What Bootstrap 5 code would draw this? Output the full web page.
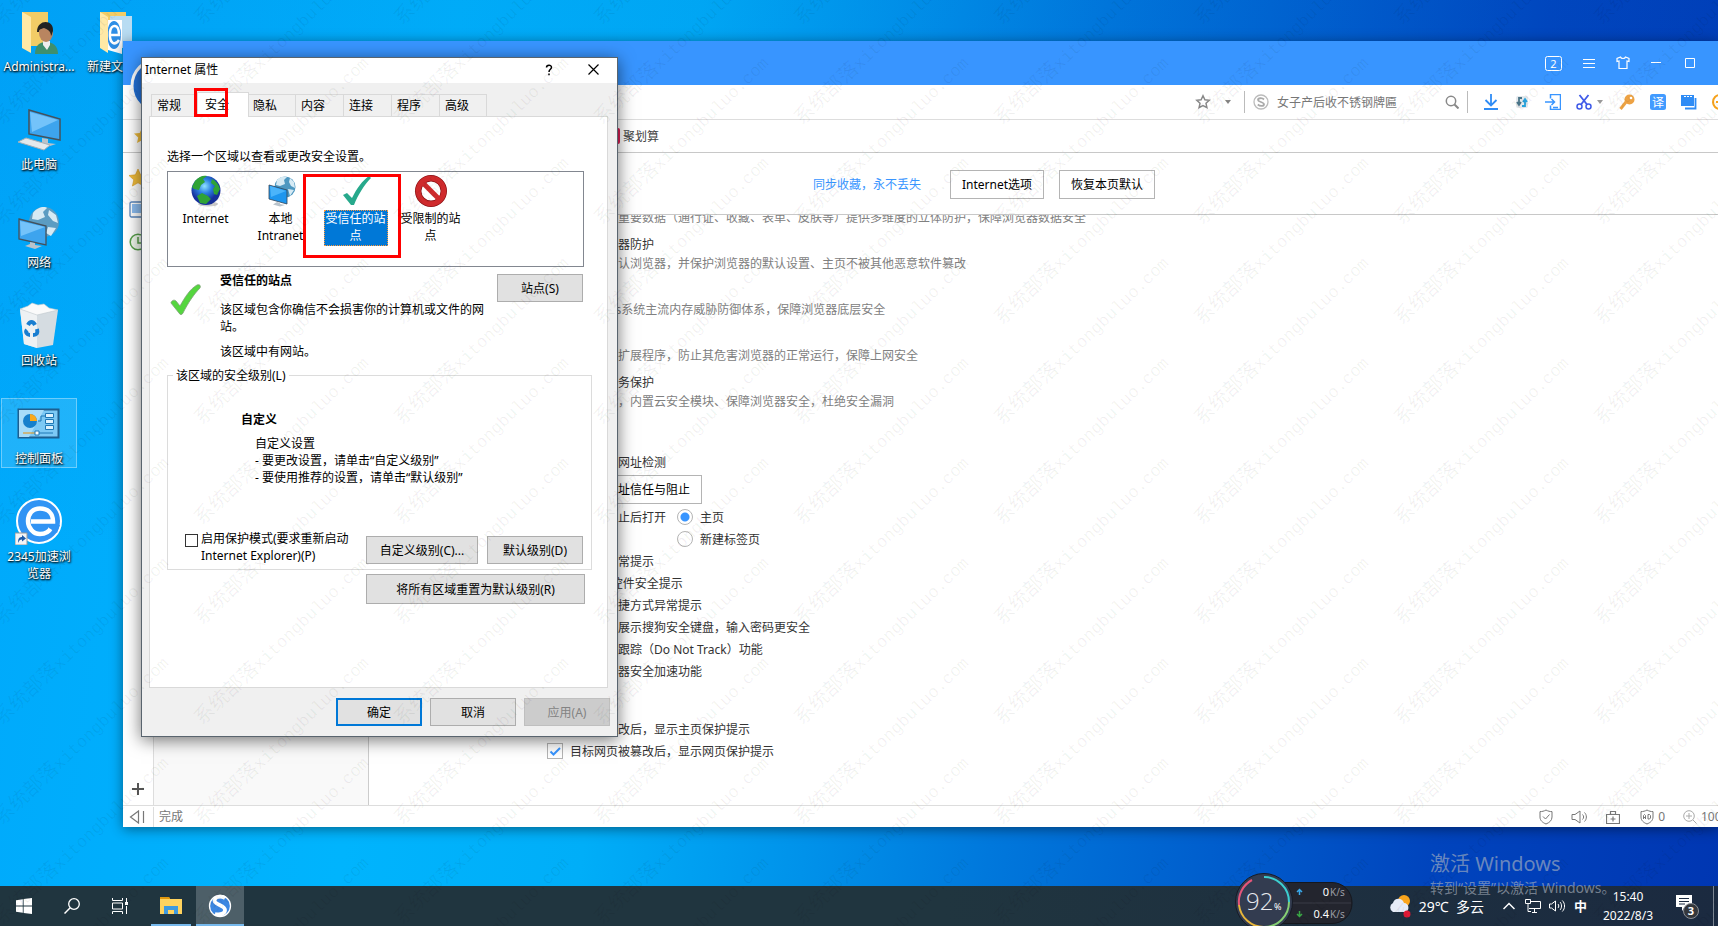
<!DOCTYPE html>
<html lang="zh-CN">
<head>
<meta charset="utf-8">
<meta name="viewport" content="width=device-width, initial-scale=1">
<title>Internet 属性</title>
<link href="https://cdn.jsdelivr.net/npm/bootstrap@5.3.0/dist/css/bootstrap.min.css" rel="stylesheet">
<style>
  body{font-family:"Noto Sans","Noto Sans CJK SC",sans-serif;font-size:12px;line-height:17px;color:#000;
    background:linear-gradient(180deg,rgba(0,90,200,.1),rgba(0,200,255,0) 60%),linear-gradient(98deg,#00a8fb 0%,#00b4fd 25%,#00aef8 38%,#0092ea 50%,#0078dc 60%,#005ecd 72%,#0044bd 84%,#0036b2 100%)}
  svg{display:block;flex:none}
  button{font-family:inherit;color:inherit}
  .plain{border:0;background:none;padding:0;display:block}
  /* desktop icons */
  .icons{left:1px;top:6px;gap:0 2px}
  .ico{width:76px;height:98px;color:#fff;text-decoration:none;text-shadow:1px 1px 2px #000,0 1px 2px rgba(0,0,0,.7)}
  .ico svg{margin:0 auto 3px}
  .ico.sel .face{background:rgba(255,255,255,.12);outline:1px solid rgba(255,255,255,.35);outline-offset:-1px}
  .face{height:70px;padding-top:1px}
  /* browser window */
  .browser{left:123px;top:41px;right:0;bottom:99px;box-shadow:0 2px 12px rgba(0,0,0,.45)}
  .b-title{height:44px;background:#3895ff;gap:21px;padding-right:23px}
  .b-tools{height:35px;border-bottom:1px solid #ddd}
  .b-marks{height:33px;border-bottom:1px solid #c8c8c8;color:#444}
  .b-logo{left:6px;top:15px}
  .vsep{width:1px;height:22px;background:#bbb}
  .find{width:160px;border:0;outline:0;padding:0;color:#777}
  .find::placeholder{color:#777;opacity:1}
  .ext{gap:15px;padding-left:15px}
  .rail{width:31px;border-right:1px solid #ddd}
  .side{width:215px;background:#f9f9f9;border-right:1px solid #ccc}
  .hd{height:62px;border-bottom:1px solid #c8c8c8;padding:2px 0 0 178px}
  .hd>div{width:608px;gap:15px}
  .hd a{color:#3895ff;text-decoration:none;margin-right:14px}
  .flat{height:29px;border:1px solid #b4b4b4;background:#fff;padding:0 11px}
  .opts{padding-left:178px;color:#333}
  .scrolled{margin-top:-7px}
  .sec{padding-left:23px;line-height:20px}
  .sec h6{font-size:12px;line-height:20px;font-weight:400;margin:7px 0 -1px}
  .sec p{margin:0;color:#808080}
  .ln{height:22px;gap:7px}
  .opts input{appearance:none;width:16px;height:16px;border:1px solid #b4b4b4;margin:0;background:#fff;flex:none}
  .opts input[type=checkbox]:checked{background:#fff url("data:image/svg+xml,%3Csvg xmlns='http://www.w3.org/2000/svg' viewBox='0 0 14 14'%3E%3Cpath d='M2.5 7.5l3 3L12 4' fill='none' stroke='%233895ff' stroke-width='2'/%3E%3C/svg%3E")}
  .opts input[type=radio]{border-radius:50%}
  .opts input[type=radio]:checked{background:radial-gradient(circle,#3895ff 4px,#fff 5px)}
  .b-status{height:22px;border-top:1px solid #ddd;color:#777}
  .b-status .st{border-left:1px solid #ddd;padding-left:5px;line-height:20px}
  /* property sheet */
  .dlg{left:141px;top:57px;width:477px;background:#f0f0f0;border:1px solid #59646e;box-shadow:0 3px 16px rgba(0,0,0,.55)}
  .dlg-t{height:25px;padding:0 0 2px 3px}
  .tabs{height:24px;margin:9px 9px 0 9px}
  .tabs button{width:48px;height:22px;border:1px solid #d9d9d9;border-bottom:0;border-right:0;background:#f0f0f0;padding:0 0 0 5px;text-align:left}
  .tabs button.on{width:52px;height:25px;margin:0 -2px -1px;padding:0 0 2px 7px;background:#fff;border-right:1px solid #d9d9d9;position:relative;z-index:1}
  .tabs button:last-child{border-right:1px solid #d9d9d9}
  .sheet{margin:0 9px 0 7px;padding:31px 14px 83px 17px;background:#fff;border:1px solid #d9d9d9}
  .zones{width:417px;height:96px;border:1px solid #828790;margin-top:5px}
  .zone{width:75px;padding-top:3px;text-align:center}
  .zone svg{margin:0 auto 3px}
  .zone span{display:block;width:64px;height:36px;margin:0 auto}
  .zone.on span{background:#0078d7;color:#fff;outline:1px dotted #ff9a3c;outline-offset:-1px}
  .w32{height:28px;min-width:86px;border:1px solid #adadad;background:#e1e1e1;padding:0}
  .w32.def{border:2px solid #0078d7}
  .w32:disabled{background:#ccc;border-color:#bfbfbf;color:#838383}
  .about{width:416px;padding-top:5px}
  .about .pic{width:53px;padding:12px 0 0 3px}
  .about .txt{width:268px}
  .about .w32{margin-top:2px}
  .lvl{width:425px;border:1px solid #dcdcdc;padding:0 8px 5px 0;margin-top:7px}
  .lvl legend{float:none;width:auto;margin:0 0 0 5px;padding:0 3px;font-size:12px;line-height:17px}
  .lvl h6{font-size:12px;line-height:17px;margin:27px 0 7px 73px}
  .lvl .why{margin-left:87px}
  .lvl .act{margin-top:44px;padding-left:17px}
  .lvl input{appearance:none;width:13px;height:13px;border:1px solid #333;background:#fff;margin:4px 3px 0 0;flex:none}
  .ring{border:3px solid #f00;pointer-events:none}
  .r1{left:52px;top:30px;width:34px;height:29px;z-index:2}
  .r2{left:135px;top:2px;width:98px;height:84px}
  /* taskbar */
  .task{height:40px;background:linear-gradient(90deg,#20353f,#20353f 55%,#1b2a40);color:#fff}
  .tb{width:48px;height:40px;display:flex;align-items:center;justify-content:center}
  .tb.run{border-bottom:2px solid #76b9ed;padding-top:2px}
  .tb.cur{background:#4d5f68}
  .wx{font-size:14px}
  .clock{line-height:19px;text-align:center;width:60px}
  .act-note{left:1430px;bottom:27px;color:rgba(175,182,192,.62);font-size:14px;line-height:22px;white-space:nowrap;pointer-events:none}
  .act-note b{font-weight:400;font-size:20px;line-height:26px;display:block}
  .meter{left:1235px;bottom:-5px}
  .wm{inset:0;width:100%;height:100%;pointer-events:none;fill:rgba(0,0,0,.06);font:20px "Noto Sans CJK SC",sans-serif}
  .wm .lat{font:17px "Liberation Mono",monospace}
</style>
</head>
<body class="vh-100 overflow-hidden position-relative d-flex flex-column">
<main class="flex-grow-1">
  <nav class="icons position-absolute d-flex">
    <div>
      <a class="ico d-block text-center" href="#"><div class="face"><svg width="48" height="48" viewBox="0 0 48 48"><path d="M7 5h26v34H7z" fill="#f2cc66"/><path d="M7 5l9 5v36l-9-5z" fill="#ffe9a6"/><path d="M20 47c0-8 4-12 11-12s12 4 12 12z" fill="#3f8f6d"/><path d="M28 34h7v4l-3 5-4-5z" fill="#eee"/><ellipse cx="31" cy="26" rx="7" ry="9" fill="#b98560"/><path d="M22 25c0-13 17-13 16-1-1 2-1 4-2 5 0-5-4-7-7-8-3 1-5 1-5 4z" fill="#222"/></svg>Administra...</div></a>
      <a class="ico d-block text-center" href="#"><div class="face"><svg width="48" height="48" viewBox="0 0 48 48"><path d="M14 5l31 9v21l-31-6z" fill="#3da4ee" stroke="#44515c" stroke-width="1.5"/><path d="M15 7l28 8-26 12z" fill="#74c3fa"/><path d="M27 33l6 1v4l8 1-9 3-11-3 6-2z" fill="#b9c3cb"/><path d="M3 37l8-4 24 7-6 5z" fill="#e4e9ec" stroke="#a6b0b7"/></svg>此电脑</div></a>
      <a class="ico d-block text-center" href="#"><div class="face"><svg width="48" height="48" viewBox="0 0 48 48"><circle cx="29" cy="19" r="15" fill="#5b9cc2"/><path d="M18 10c4-6 12-7 14-5l-4 4 2 5-7 3-6-1zM34 7l7 5 2 8-5-2-5-6zM33 24l8 1-5 8-5-3z" fill="#d6eaf4"/><path d="M4 16l27 7v19L4 36z" fill="#3da4ee" stroke="#44515c" stroke-width="1.3"/><path d="M5 18l25 6L6 33z" fill="#74c3fa"/><path d="M15 39l5 1v2l7 1-7 3-10-3 5-2z" fill="#b9c3cb"/></svg>网络</div></a>
      <a class="ico d-block text-center" href="#"><div class="face"><svg width="48" height="48" viewBox="0 0 48 48"><path d="M5 8l38 1-5 35-16 3-13-4z" fill="#d5dce1"/><path d="M5 8l17 5v34l-13-4z" fill="#eef1f3"/><path d="M5 8l8-3 4-3 6 2 6-1 5 4 9 2-21 5z" fill="#fafafa" stroke="#bfc7cc" stroke-width=".6"/><g fill="none" stroke="#1a7ed0" stroke-width="4"><path d="M13 24c2-4 5-4 7 0M22 28c1 4 0 6-4 6M12 29c-2 2 0 5 3 5"/></g></svg>回收站</div></a>
      <a class="ico sel d-block text-center" href="#"><div class="face"><svg width="48" height="48" viewBox="0 0 48 48"><path d="M3.500 10.500h40v28h-40z" fill="#7cc9f5" stroke="#1d5f90" stroke-width="2"/><path d="M4 11h25L14 38H4z" fill="#a6dcf9"/><circle cx="15" cy="22" r="7" fill="#1580cc"/><path d="M15 22v-7a7 7 0 0 1 7 7z" fill="#fba919"/><g fill="#ddf2fd" stroke="#1f78b6"><path d="M30.500 14.500h8v4h-8zM30.500 20.500h8v4h-8zM30.500 26.500h8v4h-8z"/><path d="M23 22h3v-5h4" fill="none"/></g><path d="M8 34h13" stroke="#e8920f"/><path d="M24 34h14" stroke="#1f78b6"/><path d="M20 32h4v4h-4z" fill="#fff" stroke="#1f78b6"/></svg>控制面板</div></a>
      <a class="ico d-block text-center" href="#"><div class="face"><svg width="48" height="48" viewBox="0 0 48 48"><circle cx="24" cy="24" r="22" fill="#3194f4" stroke="#fff" stroke-width="2"/><path d="M16 24.500h22c0-8-5-13-13-13-8 0-12 6-12 12.500S18 37 25 37c6 0 9-2 11-6" fill="none" stroke="#fff" stroke-width="4.500"/><path d="M34 28h11l-3 8-8-5z" fill="#3194f4"/><path d="M0 36h12v12H0z" fill="#f3f5f7" stroke="#999"/><path d="M3 46c0-4 1-6 4-6v-2l4 3.500-4 3v-2c-2 0-3 1-4 3.500z" fill="#1e5aa8"/></svg>2345加速浏<br>览器</div></a>
    </div>
    <a class="ico d-block text-center" href="#"><div class="face"><svg width="48" height="48" viewBox="0 0 48 48"><path d="M7 5h26v34H7z" fill="#f2cc66"/><path d="M17 9h22v32H17z" fill="#b8dcf2"/><path d="M15 13h14v34l-14-4z" fill="#fff"/><ellipse cx="21" cy="28" rx="7" ry="14" fill="#2e8ee6"/><path d="M16 28h10c0-12-8-11-9-3-1 12 5 14 9 8" stroke="#fff" stroke-width="2.500" fill="none"/><path d="M7 5l8 5v36l-8-5z" fill="#ffe9a6"/></svg>新建文件夹</div></a>
  </nav>

  <section class="browser position-absolute bg-white d-flex flex-column overflow-hidden">
    <header class="b-title d-flex align-items-center justify-content-end text-white">
      <button class="plain" aria-label="2"><svg width="17" height="15" viewBox="0 0 17 15"><rect x=".5" y=".5" width="16" height="14" rx="2" fill="none" stroke="#fff"/><text x="8.500" y="11.500" text-anchor="middle" font-size="11" fill="#fff">2</text></svg></button>
      <button class="plain" aria-label="菜单"><svg width="12" height="11" viewBox="0 0 12 11"><path d="M0 1.500h12M0 5.500h12M0 9.500h12" stroke="#fff"/></svg></button>
      <button class="plain" aria-label="皮肤"><svg width="14" height="14" viewBox="0 0 14 14"><path d="M4.500 1L1 2.500v3l2-.5v7.500h8V5l2 .5v-3L9.500 1C9 3 5 3 4.500 1z" fill="none" stroke="#fff" stroke-width="1.200"/></svg></button>
      <button class="plain" style="margin-right:3px" aria-label="最小化"><svg width="10" height="10" viewBox="0 0 10 10"><path d="M0 4.500h10" stroke="#fff"/></svg></button>
      <button class="plain" aria-label="最大化"><svg width="10" height="10" viewBox="0 0 10 10"><path d="M.5.500h9v9h-9z" fill="none" stroke="#fff"/></svg></button>
    </header>
    <svg class="b-logo position-absolute" width="60" height="60" viewBox="0 0 60 60"><circle cx="30" cy="30" r="27" fill="#2473dc" stroke="#fff" stroke-width="3"/></svg>
    <div class="b-tools d-flex align-items-center justify-content-end">
      <button class="plain" aria-label="收藏"><svg width="16" height="16" viewBox="0 0 16 16"><path d="M8 1.800l1.900 4 4.300.5-3.200 3 .9 4.300L8 11.500l-3.900 2.100.9-4.300-3.200-3 4.300-.5z" fill="none" stroke="#888" stroke-width="1.500"/></svg></button>
      <svg width="8" height="5" viewBox="0 0 8 5" style="margin:0 12px 0 13px"><path d="M1 0h6L4 4z" fill="#888"/></svg>
      <span class="vsep"></span>
      <svg width="16" height="16" viewBox="0 0 16 16" class="mx-2"><circle cx="8" cy="8" r="7" fill="none" stroke="#bbb" stroke-width="1.300"/><path d="M11 5.500C9 3.500 5 4 5 6s6 2 6 4.200-4 2.300-6.200.3" fill="none" stroke="#aaa" stroke-width="1.800"/></svg>
      <input class="find" aria-label="搜索" placeholder="女子产后收不锈钢牌匾">
      <button class="plain ms-2" aria-label="搜索"><svg width="14" height="14" viewBox="0 0 14 14"><circle cx="6" cy="6" r="4.700" fill="none" stroke="#888" stroke-width="1.500"/><path d="M9.500 9.500l4 4" stroke="#888" stroke-width="2"/></svg></button>
      <span class="vsep ms-2"></span>
      <div class="ext d-flex align-items-center">
        <button class="plain" aria-label="下载"><svg width="16" height="16" viewBox="0 0 16 16"><path d="M8 0v11M2.500 6L8 11.500 13.500 6M1 15h14" fill="none" stroke="#2f8cf5" stroke-width="1.800"/></svg></button>
        <button class="plain" aria-label="刷新"><svg width="16" height="16" viewBox="0 0 16 16"><rect x="2" y="2" width="12" height="12" rx="2" fill="#e3e8ec"/><path d="M5 10V4h3M3 8l2 3 2-3" fill="none" stroke="#4a7487" stroke-width="1.800"/><path d="M11 6v6H8M9 8l2-3 2 3" fill="none" stroke="#26a2dc" stroke-width="1.800"/></svg></button>
        <button class="plain" aria-label="发送到手机"><svg width="16" height="16" viewBox="0 0 16 16"><path d="M5.500 4.500v-4h10v15h-10v-4M0 8h9M6.500 5l3 3-3 3M8 13.500h5" fill="none" stroke="#3895ff" stroke-width="1.500"/></svg></button>
        <div class="d-flex align-items-center"><button class="plain" aria-label="截图"><svg width="16" height="16" viewBox="0 0 16 16"><path d="M3.500 1l7.500 9.500M12.500 1L5 10.500" stroke="#3f5ae8" stroke-width="1.800"/><circle cx="3.500" cy="12.500" r="2.500" fill="none" stroke="#3f5ae8" stroke-width="1.500"/><circle cx="12.500" cy="12.500" r="2.500" fill="none" stroke="#3f5ae8" stroke-width="1.500"/></svg></button><svg width="8" height="5" viewBox="0 0 8 5" class="ms-1"><path d="M1 0h6L4 4z" fill="#999"/></svg></div>
        <button class="plain" aria-label="密码"><svg width="16" height="16" viewBox="0 0 16 16"><circle cx="10.500" cy="5.500" r="5" fill="#eda244"/><path d="M7 8l-5.500 7" stroke="#eda244" stroke-width="3"/><circle cx="12" cy="4" r="1.300" fill="#fff"/></svg></button>
        <button class="plain" aria-label="翻译"><svg width="16" height="16" viewBox="0 0 16 16"><rect width="16" height="16" rx="2.500" fill="#429bff"/><text x="8" y="12.500" font-size="12" text-anchor="middle" fill="#fff">译</text></svg></button>
        <button class="plain" aria-label="窗口"><svg width="16" height="16" viewBox="0 0 16 16"><path d="M0 1h13v11H0z" fill="#2f8cf5"/><path d="M14.500 4v10.500H4" fill="none" stroke="#2f8cf5" stroke-width="1.800"/><path d="M3 2.500h2M6 2.500h2M9 2.500h2" stroke="#fff"/></svg></button>
        <svg width="6" height="16" viewBox="0 0 6 16"><circle cx="8" cy="8" r="7" fill="none" stroke="#f6a21c" stroke-width="2"/><path d="M4 8h2" stroke="#f6a21c" stroke-width="2"/></svg>
      </div>
    </div>
    <div class="b-marks d-flex align-items-center">
      <svg width="16" height="16" viewBox="0 0 16 16" style="margin-left:11px"><path d="M8 0l2.300 5 5.700.600-4.200 3.800 1.200 5.600-5-2.800L3 15l1.200-5.600L0 5.600 5.700 5z" fill="#eebb3c"/></svg>
      <a href="#" class="d-flex align-items-center text-reset text-decoration-none" style="margin-left:454px"><svg width="16" height="16" viewBox="0 0 16 16"><rect width="16" height="16" rx="2" fill="#dd1f55"/><path d="M10 4h4M10 7h4M10 10h4" stroke="#fff"/></svg>&nbsp;聚划算</a>
    </div>
    <div class="d-flex flex-grow-1 overflow-hidden">
      <aside class="rail d-flex flex-column align-items-center">
        <svg width="18" height="18" viewBox="0 0 18 18" style="margin-top:16px"><path d="M9 0l2.600 5.800 6.400.7-4.800 4.300 1.400 6.200L9 13.800 3.400 17l1.400-6.200L0 6.500l6.400-.7z" fill="#f1bd3b" stroke="#d99a1c" stroke-width=".6"/></svg>
        <svg width="18" height="18" viewBox="0 0 18 18" style="margin-top:14px"><rect x="1" y="1" width="16" height="15" rx="1.500" fill="#fff" stroke="#5a87bd" stroke-width="1.300"/><path d="M3 3h12v9H3z" fill="#8dbdf0"/></svg>
        <svg width="18" height="18" viewBox="0 0 18 18" style="margin-top:14px"><circle cx="9" cy="9" r="7.800" fill="#f2faee" stroke="#57a04a" stroke-width="1.500"/><path d="M9 4v6h5" fill="none" stroke="#57a04a" stroke-width="1.500"/></svg>
        <button class="plain mt-auto" style="margin-bottom:10px" aria-label="添加"><svg width="12" height="12" viewBox="0 0 12 12"><path d="M6 0v12M0 6h12" stroke="#555" stroke-width="2"/></svg></button>
      </aside>
      <aside class="side flex-shrink-0"></aside>
      <div class="flex-grow-1 d-flex flex-column overflow-hidden">
        <div class="hd d-flex align-items-center flex-shrink-0"><div class="d-flex align-items-center justify-content-end">
          <a href="#">同步收藏，永不丢失</a><button class="flat">Internet选项</button><button class="flat">恢复本页默认</button></div></div>
        <div class="opts overflow-hidden flex-grow-1">
          <div class="scrolled">
            <div class="sec">
              <p>对用户的重要数据（通行证、收藏、表单、皮肤等）提供多维度的立体防护，保障浏览器数据安全</p>
              <h6>搜狗浏览器防护</h6><p>可锁定默认浏览器，并保护浏览器的默认设置、主页不被其他恶意软件篡改</p>
              <h6>内存防护</h6><p>Windows系统主流内存威胁防御体系，保障浏览器底层安全</p>
              <h6>扩展防护</h6><p>拦截恶意扩展程序，防止其危害浏览器的正常运行，保障上网安全</p>
              <h6>安全云服务保护</h6><p>安全防护，内置云安全模块、保障浏览器安全，杜绝安全漏洞</p>
            </div>
            <label class="ln d-flex align-items-center" style="margin-top:39px"><input type="checkbox" checked>开启安全网址检测</label>
            <button class="flat d-block text-black" style="margin:2px 0 2px 47px">网址信任与阻止</button>
            <div class="ln d-flex align-items-center" style="padding-left:59px"><span class="me-1">阻止后打开</span><label class="d-flex align-items-center" style="gap:7px"><input type="radio" name="after" checked>主页</label></div>
            <label class="ln d-flex align-items-center" style="padding-left:130px"><input type="radio" name="after">新建标签页</label>
            <label class="ln d-flex align-items-center"><input type="checkbox" checked>主页面异常提示</label>
            <label class="ln d-flex align-items-center"><input type="checkbox" checked>ActiveX控件安全提示</label>
            <label class="ln d-flex align-items-center"><input type="checkbox" checked>浏览器快捷方式异常提示</label>
            <label class="ln d-flex align-items-center"><input type="checkbox" checked>网银页面展示搜狗安全键盘，输入密码更安全</label>
            <label class="ln d-flex align-items-center"><input type="checkbox">开启禁止跟踪（Do Not Track）功能</label>
            <label class="ln d-flex align-items-center"><input type="checkbox" checked>开启浏览器安全加速功能</label>
            <label class="ln d-flex align-items-center" style="margin-top:36px"><input type="checkbox" checked>主页被篡改后，显示主页保护提示</label>
            <label class="ln d-flex align-items-center"><input type="checkbox" checked>目标网页被篡改后，显示网页保护提示</label>
          </div>
        </div>
      </div>
    </div>
    <footer class="b-status d-flex align-items-center">
      <button class="plain" style="width:30px" aria-label="收起"><svg width="16" height="14" viewBox="0 0 16 14" style="margin-left:6px"><path d="M9.500 1v12L1.500 7zM14.500 1v12" fill="none" stroke="#777" stroke-width="1.200"/></svg></button>
      <span class="st">完成</span>
      <svg class="ms-auto" width="14" height="16" viewBox="0 0 14 16"><path d="M7 1c2 1.200 4 1.600 6 1.600V8c0 3.500-2.500 5.500-6 7-3.500-1.500-6-3.500-6-7V2.600C3 2.600 5 2.200 7 1z" fill="none" stroke="#777"/><path d="M4 7.500L6.500 10l4-4.500" fill="none" stroke="#777"/></svg>
      <svg style="margin-left:18px" width="16" height="14" viewBox="0 0 16 14"><path d="M1 4.500h3L9 1v12L4 9.500H1zM11.500 4.500c1.500 1.500 1.500 3.500 0 5M13.500 2.500c2.500 2.500 2.500 6.500 0 9" fill="none" stroke="#777"/></svg>
      <svg style="margin-left:19px" width="14" height="14" viewBox="0 0 14 14"><path d="M.5 4.500h13v9H.5zM4.500 4.500v-3h5v3M7 6.500v5M4.500 9h5" fill="none" stroke="#777" stroke-width="1.200"/></svg>
      <svg style="margin-left:20px" width="14" height="16" viewBox="0 0 14 16"><path d="M7 1c2 1.200 4 1.600 6 1.600V8c0 3.500-2.500 5.500-6 7-3.500-1.500-6-3.500-6-7V2.600C3 2.600 5 2.200 7 1z" fill="none" stroke="#777"/><path d="M3.500 10V6.500l1-1 1 1V10M3.500 8.500h2M8 5.500h1.500l1 1V9l-1 1H8z" fill="none" stroke="#777"/></svg>
      <span style="margin-left:4px">0</span>
      <svg style="margin-left:18px" width="14" height="14" viewBox="0 0 14 14"><circle cx="6" cy="6" r="5.300" fill="none" stroke="#aaa"/><path d="M3 6h6M6 3v6M10 10l3.500 3.500" stroke="#aaa"/></svg>
      <span class="overflow-hidden" style="margin-left:4px;width:17px">100%</span>
    </footer>
  </section>

  <section class="dlg position-absolute" role="dialog" aria-label="Internet 属性">
    <div class="dlg-t bg-white d-flex align-items-center">Internet 属性
      <button class="plain ms-auto" style="margin-right:35px" aria-label="帮助"><svg width="8" height="12" viewBox="0 0 8 12"><path d="M1.500 3.500C1.500 .5 6.500.5 6.500 3.300 6.500 5.300 4 5.300 4 8M4 9.500v1.800" fill="none" stroke="#000" stroke-width="1.500"/></svg></button>
      <button class="plain" style="margin-right:18px" aria-label="关闭"><svg width="11" height="11" viewBox="0 0 11 11"><path d="M.5.500l10 10M10.500.500l-10 10" stroke="#000" stroke-width="1.200"/></svg></button>
    </div>
    <div class="ring r1 position-absolute"></div>
    <div class="tabs d-flex align-items-end" role="tablist">
      <button>常规</button><button class="on">安全</button><button>隐私</button><button>内容</button><button>连接</button><button>程序</button><button>高级</button>
    </div>
    <div class="sheet">
      <div style="line-height:18px">选择一个区域以查看或更改安全设置。</div>
      <div class="zones d-flex position-relative">
        <div class="zone"><svg width="32" height="32" viewBox="0 0 32 32"><defs><radialGradient id="gl" cx=".45" cy=".35"><stop offset="0" stop-color="#8fe3ff"/><stop offset=".5" stop-color="#2a7ee0"/><stop offset="1" stop-color="#16309c"/></radialGradient></defs><ellipse cx="18" cy="29" rx="10" ry="2.500" fill="#ccc"/><circle cx="16" cy="15.500" r="14.500" fill="url(#gl)"/><path d="M5 6c4-5 9-6 12-5l-4 3 2 3-4 3-2 5-5-1-2-2zM22 4c4 2 7 6 8 10l-3 6-3-1-1-5 2-3-4-3zM7 21l5-3 6 3 3 3-5 5-6-1z" fill="#2fa336"/></svg><span>Internet</span></div>
        <div class="zone"><svg width="32" height="32" viewBox="0 0 32 32"><circle cx="20" cy="12" r="10.500" fill="#4d97c0"/><path d="M12 5c3-4 9-4 10-3l-3 3 1 4-5 2-4-1zM25 3l4 4 1 6-4-2-2-4zM23 14l6 1-4 6z" fill="#d6eaf4"/><path d="M4 10l18 5v14L4 24z" fill="#1e96ee" stroke="#345" stroke-width=".8"/><path d="M5 11l16 5L6 22z" fill="#4bb4fa"/><path d="M12 27l3 1v1l5 1-5 1.500-7-2z" fill="#b9c3cb"/></svg><span>本地 Intranet</span></div>
        <div class="zone on"><svg width="32" height="32" viewBox="0 0 32 32"><path d="M3 20l4-2 5 5C17 13 22 6 29 1l2 2C24 10 18 20 14 30h-3z" fill="#27a98c"/></svg><span>受信任的站点</span></div>
        <div class="zone"><svg width="32" height="32" viewBox="0 0 32 32"><circle cx="16" cy="16" r="12.800" fill="#fff" stroke="#8d1114" stroke-width="6.400"/><circle cx="16" cy="16" r="12.800" fill="none" stroke="#cf2a2c" stroke-width="5"/><path d="M7 7l18 18" stroke="#cf2a2c" stroke-width="5"/></svg><span>受限制的站点</span></div>
        <div class="ring r2 position-absolute"></div>
      </div>
      <div class="about d-flex align-items-start">
        <div class="pic"><svg width="32" height="32" viewBox="0 0 32 32"><path d="M1 19c0-2 3-4 5-2l4 5C15 13 20 5 27 1c3-1 4 1 3 3C24 10 18 19 13 29c-1 2-3 2-4 0z" fill="#55d63f" stroke="#7f9f78" stroke-width=".8"/></svg></div>
        <div class="txt"><b>受信任的站点</b><div style="margin-top:12px">该区域包含你确信不会损害你的计算机或文件的网站。</div><div class="mt-2">该区域中有网站。</div></div>
        <button class="w32 ms-auto">站点(S)</button>
      </div>
      <fieldset class="lvl"><legend>该区域的安全级别(L)</legend>
        <h6 class="fw-bold">自定义</h6>
        <div class="why">自定义设置<br>- 要更改设置，请单击“自定义级别”<br>- 要使用推荐的设置，请单击“默认级别”</div>
        <div class="act d-flex align-items-end">
          <label class="d-flex align-items-start"><input type="checkbox"><span>启用保护模式(要求重新启动<br>Internet Explorer)(P)</span></label>
          <button class="w32 ms-auto" style="width:112px;margin-right:9px">自定义级别(C)...</button><button class="w32" style="width:96px">默认级别(D)</button>
        </div>
      </fieldset>
      <button class="w32 d-block" style="width:219px;height:30px;margin:4px 0 0 199px">将所有区域重置为默认级别(R)</button>
    </div>
    <div class="d-flex justify-content-end gap-2" style="padding:10px 7px 10px 0">
      <button class="w32 def">确定</button><button class="w32">取消</button><button class="w32" disabled>应用(A)</button>
    </div>
  </section>
</main>

<footer class="task d-flex align-items-center">
  <button class="plain tb" aria-label="开始"><svg width="16" height="16" viewBox="0 0 16 16"><path d="M0 2.200L6.800 1.200v6.400H0zM7.600 1.100L16 0v7.600H7.600zM0 8.400h6.800v6.400L0 13.800zM7.600 8.400H16V16l-8.400-1.100z" fill="#fff"/></svg></button>
  <button class="plain tb" aria-label="搜索"><svg width="16" height="16" viewBox="0 0 16 16"><circle cx="10" cy="6" r="5.300" fill="none" stroke="#fff" stroke-width="1.300"/><path d="M6.200 9.800L.5 15.500" stroke="#fff" stroke-width="1.500"/></svg></button>
  <button class="plain tb" aria-label="任务视图"><svg width="16" height="16" viewBox="0 0 16 16"><path d="M.5 0v2.500h10V0M.5 16v-2.500h10V16M.5 5h10v6H.5zM14.500 0v4M14.500 8v8" fill="none" stroke="#fff"/><path d="M13 4h3v3h-3z" fill="#fff"/></svg></button>
  <button class="plain tb run" style="width:40px;margin-left:7px" aria-label="资源管理器"><svg width="22" height="20" viewBox="0 0 22 20"><path d="M0 1h9l1 1v3H0z" fill="#e0980e"/><path d="M0 3h22v15H0z" fill="#ffd35e"/><path d="M4 18v-8h14v8h-4v-4H8v4z" fill="#3f9ade"/></svg></button>
  <button class="plain tb run cur" style="margin-left:5px" aria-label="搜狗浏览器"><svg width="24" height="24" viewBox="0 0 24 24"><circle cx="12" cy="12" r="10.500" fill="#3c87e2" stroke="#fff" stroke-width="1.300"/><path d="M17 4C11 1 5 4 7 8c2 3 10 4 10 8 0 4-5 5-10 4" fill="none" stroke="#fff" stroke-width="3.800"/></svg></button>
  <div class="ms-auto d-flex align-items-center">
    <svg width="24" height="24" viewBox="0 0 24 24"><circle cx="16" cy="7" r="6" fill="#f9a51d"/><path d="M5 18a5 5 0 0 1 0-9c1-5 9-6 11 0 5 0 6 7 2 9z" fill="#e6ecf8"/><circle cx="19" cy="20" r="3.500" fill="#e21836"/></svg>
    <span class="wx" style="margin:0 19px 0 7px">29℃&nbsp; 多云</span>
    <svg width="12" height="8" viewBox="0 0 12 8"><path d="M.5 7L6 1.500 11.500 7" fill="none" stroke="#fff" stroke-width="1.500"/></svg>
    <svg style="margin-left:10px" width="16" height="14" viewBox="0 0 16 14"><path d="M5 2.500h10.500v7H4M7 13.500h5M9.500 9.500v4M.5.500h5v4h-5zM3 4.500v8h3" fill="none" stroke="#fff"/></svg>
    <svg style="margin-left:8px" width="16" height="14" viewBox="0 0 16 14"><path d="M.5 5h2L6.500 2v10L2.500 9h-2zM9 5c1 1 1 3 0 4M11 3c2 2 2 6 0 8M13.300 1.500c3 3 3 8 0 11" fill="none" stroke="#fff"/></svg>
    <span style="margin:0 11px 0 9px;font-size:13px" class="fw-bold">中</span>
    <div class="clock">15:40<br>2022/8/3</div>
    <div class="position-relative" style="margin:0 14px 0 17px"><svg width="24" height="28" viewBox="0 0 24 28"><path d="M1 3h16v12H10l-3 4v-4H1z" fill="#fff"/><path d="M4 6.500h10M4 9.500h10M4 12h6" stroke="#1b2a40"/><circle cx="16" cy="19" r="7.500" fill="#34373c" stroke="#8b8f96"/><text x="16" y="23" font-size="11" font-weight="700" fill="#fff" text-anchor="middle">3</text></svg></div>
    <span style="width:1px;height:40px;background:#7b8592;margin-right:4px"></span>
  </div>
</footer>

<svg class="meter position-absolute" width="118" height="58" viewBox="0 0 118 58"><rect x="30" y="9.500" width="87" height="41" rx="20" fill="#23252e" stroke="#15171d"/><path d="M50 30h66" stroke="#3a3c46"/><circle cx="29" cy="29" r="28.500" fill="#333c50" stroke="#171b25"/><g fill="none" stroke-width="2"><path d="M29 4a25 25 0 0 1 25 25" stroke="#3ccfd0"/><path d="M54 29a25 25 0 0 1-25 25" stroke="#86cf74"/><path d="M29 54a25 25 0 0 1-25-22" stroke="#e8b63a"/><path d="M4 32a25 25 0 0 1 13-25" stroke="#e4567a"/></g><text x="11" y="37" font-size="24" fill="#e8eaee" font-family="Open Sans" font-weight="300">92</text><text x="39" y="37" font-size="9" fill="#fff">%</text><path d="M64.500 22v-5M62 19l2.500-2.500L67 19" stroke="#38a8ea" stroke-width="1.500" fill="none"/><path d="M64.500 38v5M62 41l2.500 2.500L67 41" stroke="#3aa845" stroke-width="1.500" fill="none"/><g text-anchor="end" fill="#fff" font-size="11"><text x="94" y="23">0</text><text x="94" y="45">0.4</text></g><g fill="#9a9da5" font-size="10"><text x="95" y="23">K/s</text><text x="95" y="45">K/s</text></g></svg>
<div class="act-note position-absolute"><b>激活 Windows</b>转到“设置”以激活 Windows。</div>
<svg class="wm position-absolute" aria-hidden="true"></svg>
<script>
  // repeat the diagonal site mark over the whole desktop
  const wm = document.querySelector('.wm');
  let out = '';
  for (let y = 26; y < innerHeight + 200; y += 100)
    for (let x = -198; x < innerWidth; x += 200)
      out += `<text transform="translate(${x} ${y}) rotate(-44)">系统部落<tspan class="lat">xitongbuluo.com</tspan></text>`;
  wm.innerHTML = out;
</script>
<script src="https://cdn.jsdelivr.net/npm/bootstrap@5.3.0/dist/js/bootstrap.bundle.min.js"></script>
</body>
</html>
